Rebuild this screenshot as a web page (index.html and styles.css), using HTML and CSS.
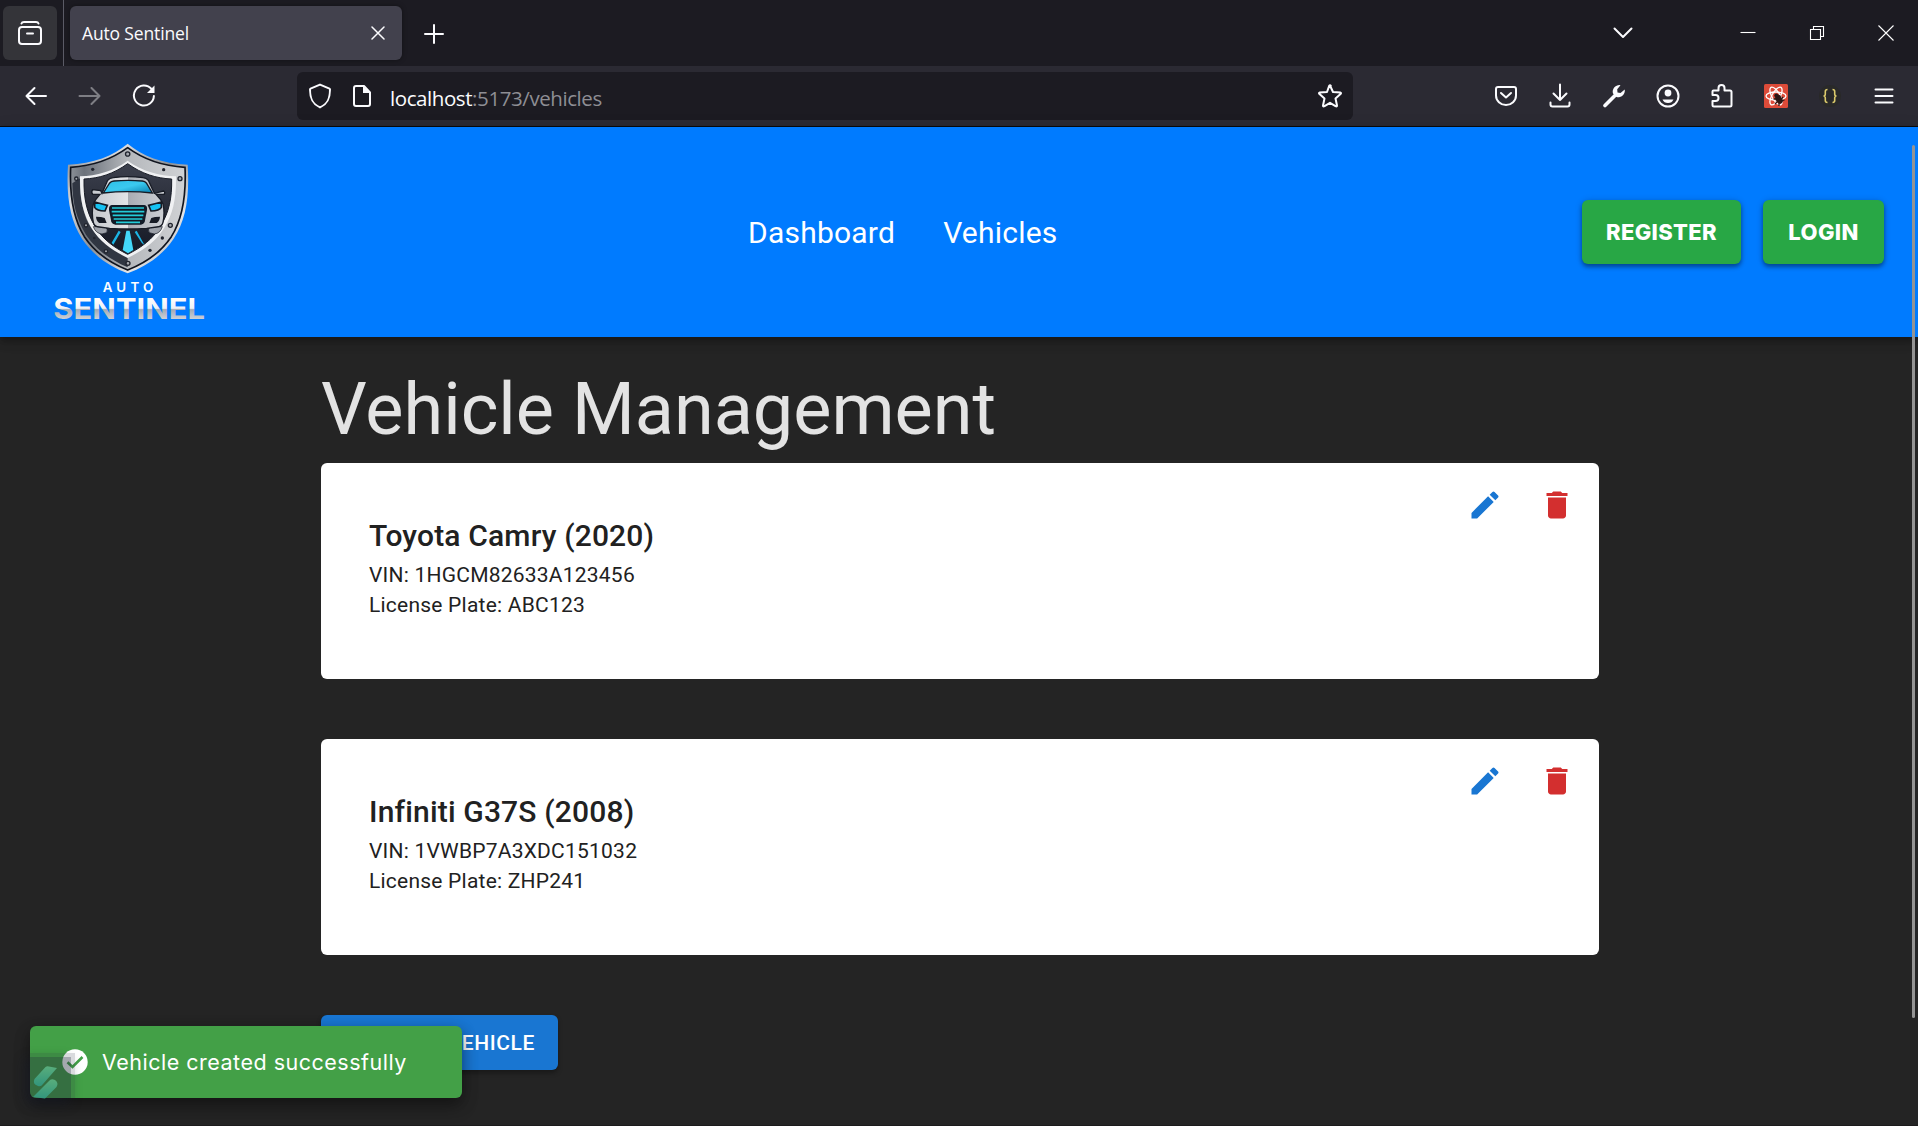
FILE: index.html
```html
<!DOCTYPE html>
<html lang="en">
<head>
<meta charset="utf-8">
<title>Auto Sentinel</title>
<link rel="stylesheet" href="styles.css">
</head>
<body>
<div class="tabbar">
  <div class="view-btn">
    <svg class="ico" width="26" height="26" viewBox="0 0 26 26"><path d="M4.500 2.500Q5 1 7 1H19Q21 1 21.500 2.500"/><rect x="2" y="6" width="22" height="17" rx="3"/><path d="M10 12.500H16"/></svg>
  </div>
  <div class="tab">
    <span class="tab-title">Auto Sentinel</span>
    <svg class="ico thin" width="14" height="14" viewBox="0 0 14 14"><path d="M1 1 13 13M13 1 1 13"/></svg>
  </div>
  <svg class="ico new-tab" width="20" height="20" viewBox="0 0 20 20"><path d="M10 1V19M1 10H19"/></svg>
  <div class="win-controls">
    <span class="list-tabs"><svg class="ico" width="20" height="12" viewBox="0 0 20 12"><path d="M1.500 1.500 10 10 18.500 1.500"/></svg></span>
    <span class="win"><svg class="ico hair" width="16" height="16" viewBox="0 0 16 16"><path d="M.5 7.500H15.500"/></svg></span>
    <span class="win"><svg class="ico hair" width="16" height="16" viewBox="0 0 16 16"><path d="M1.500 4.500H11.500V14.500H1.500ZM4.500 4.500V1.500H14.500V11.500H11.500"/></svg></span>
    <span class="win"><svg class="ico hair" width="18" height="18" viewBox="0 0 18 18"><path d="M1.500 1.500 16.500 16.500M16.500 1.500 1.500 16.500"/></svg></span>
  </div>
</div>
<div class="toolbar">
  <span class="slot"><svg class="ico" width="24" height="24" viewBox="0 0 24 24"><path d="M22 12H2.500M10.500 4 2.500 12 10.500 20"/></svg></span>
  <span class="slot dim"><svg class="ico" width="24" height="24" viewBox="0 0 24 24"><path d="M1.500 12H21.500M13.500 4 21.500 12 13.500 20"/></svg></span>
  <span class="slot"><svg class="ico" width="24" height="24" viewBox="0 0 24 24"><path d="M19.500 5A10 10 0 1 0 21.900 12"/><path class="fill" d="M22.500 1.500V9H15Z"/></svg></span>
  <div class="urlbar">
    <svg class="ico" width="24" height="26" viewBox="0 0 24 26"><path d="M12 1.600 2.500 5.600Q2 5.800 2 6.500C2 15 4 21 12 24.400C20 21 22 15 22 6.500Q22 5.800 21.500 5.600Z"/></svg>
    <svg class="ico page-ico" width="20" height="24" viewBox="0 0 20 24"><path d="M12 2H4Q2 2 2 4V20Q2 22 4 22H16Q18 22 18 20V8.500Z"/><path class="fill" d="M11 2V9H18Z"/></svg>
    <span class="url">localhost<span class="url-rest">:5173/vehicles</span></span>
    <svg class="ico star" width="26" height="26" viewBox="0 0 26 26"><path d="M13 2.500 16 9 23.500 9.600Q24.500 10 23.500 11L18.500 15.500 20 22.500Q20 24 18.500 23.200L13 19.800 7.500 23.200Q6 24 6 22.500L7.500 15.500 2.500 11Q1.500 10 2.500 9.600L10 9 12.200 2.800Q13 1.500 13.800 2.800"/></svg>
  </div>
  <div class="actions">
    <span class="slot"><svg class="ico" width="24" height="24" viewBox="0 0 24 24"><path d="M4 3H20Q22 3 22 5V11.500A10 9.500 0 0 1 2 11.500V5Q2 3 4 3Z"/><path d="M7 9 12 13.500 17 9"/></svg></span>
    <span class="slot"><svg class="ico" width="24" height="26" viewBox="0 0 24 26"><path d="M12 1.500V17M5.500 10.500 12 17 18.500 10.500M2.500 19.500V21.500Q2.500 23.500 4.500 23.500H19.500Q21.500 23.500 21.500 21.500V19.500"/></svg></span>
    <span class="slot"><svg width="24" height="24" viewBox="0 0 24 24"><path d="M3 21.500 14 10.500" stroke="#fbfbfe" stroke-width="3.600" stroke-linecap="round"/><path fill="#fbfbfe" d="M18.500 1.200A6.500 6.500 0 0 0 11 9.500L14.500 13A6.500 6.500 0 0 0 22.700 5.600L18.500 9 15.500 8.500 15.200 5.300Z"/></svg></span>
    <span class="slot"><svg class="ico" width="26" height="26" viewBox="0 0 26 26"><circle cx="13" cy="13" r="10.500"/><circle class="fill" cx="13" cy="10" r="3.400"/><path class="fill" d="M7.500 16.500H18.500Q17 20 13 20T7.500 16.500Z"/></svg></span>
    <span class="slot"><svg class="ico" width="24" height="26" viewBox="0 0 24 26"><path d="M2.500 11V8.500Q2.500 7.500 3.500 7.500H8.500V5A3 3 0 0 1 14.500 5V7.500H20Q21.500 7.500 21.500 9V22Q21.500 23.500 20 23.500H4Q2.500 23.500 2.500 22V18H5.500A3 3 0 0 0 5.500 12H2.500Z"/></svg></span>
    <span class="slot"><svg width="24" height="24" viewBox="0 0 24 24"><rect width="24" height="24" rx="1.500" fill="#dd4b39"/><g fill="none" stroke="#fff" stroke-width="1.300"><ellipse cx="12" cy="12" rx="10" ry="4"/><ellipse cx="12" cy="12" rx="10" ry="4" transform="rotate(60 12 12)"/><ellipse cx="12" cy="12" rx="10" ry="4" transform="rotate(120 12 12)"/></g><ellipse cx="15" cy="15.500" rx="3" ry="4.500" transform="rotate(-40 15 15.500)" fill="#2a1715"/><circle cx="12.300" cy="11.600" r="2" fill="#2a1715"/><path d="M9.500 15 13 15M11 20 14 17M14 11 17 12.500M19 13 17 15.500M15 22 15 18M20.500 16 17 17" stroke="#2a1715" stroke-width="1.300"/></svg></span>
    <span class="slot"><svg width="24" height="24" viewBox="0 0 24 24"><circle cx="12" cy="12" r="11" fill="#292929"/><path d="M9.500 5.500Q7.300 5.500 7.300 7.500V10Q7.300 12 5.500 12Q7.300 12 7.300 14V16.500Q7.300 18.500 9.500 18.500M14.500 5.500Q16.700 5.500 16.700 7.500V10Q16.700 12 18.500 12Q16.700 12 16.700 14V16.500Q16.700 18.500 14.500 18.500" fill="none" stroke="#dccb6c" stroke-width="1.600"/></svg></span>
    <span class="slot"><svg class="ico" width="20" height="20" viewBox="0 0 20 20"><path d="M1.500 3.500H18.500M1.500 10H18.500M1.500 16.500H18.500"/></svg></span>
  </div>
</div>

<div class="viewport">
  <header class="header">
    <svg class="logo" width="180" height="210" viewBox="0 -9 540 630">
      <defs>
        <linearGradient id="steel" x1="0" y1="0" x2="1" y2="1"><stop offset="0" stop-color="#777c83"/><stop offset=".25" stop-color="#d9dbde"/><stop offset=".5" stop-color="#8b8f95"/><stop offset=".75" stop-color="#e4e5e7"/><stop offset="1" stop-color="#85898f"/></linearGradient>
        <linearGradient id="rim" x1="0" y1="0" x2="1" y2="0"><stop offset="0" stop-color="#8b9097"/><stop offset=".12" stop-color="#6c727b"/><stop offset=".5" stop-color="#b5b8bc"/><stop offset="1" stop-color="#d0d2d5"/></linearGradient>
        <linearGradient id="inner" x1="0" y1="0" x2="0" y2="1"><stop offset="0" stop-color="#3c404d"/><stop offset="1" stop-color="#141824"/></linearGradient>
        <linearGradient id="glass" x1="0" y1="0" x2="1" y2="1"><stop offset="0" stop-color="#2bbfe8"/><stop offset=".5" stop-color="#3bc9ef"/><stop offset="1" stop-color="#087fb0"/></linearGradient>
        <linearGradient id="body" x1="0" y1="0" x2="1" y2="0"><stop offset="0" stop-color="#c5c8cd"/><stop offset=".5" stop-color="#e3e4e7"/><stop offset=".5" stop-color="#a9acb3"/><stop offset="1" stop-color="#cdd0d5"/></linearGradient>
        <linearGradient id="word" gradientUnits="userSpaceOnUse" x1="0" y1="503" x2="0" y2="567"><stop offset="0" stop-color="#fff"/><stop offset=".5" stop-color="#eef1f5"/><stop offset=".56" stop-color="#a4abb5"/><stop offset="1" stop-color="#ccd0d6"/></linearGradient>
      </defs>
      <path d="M263 41C220 77 160 101 84 104C78 200 90 270 126 326C163 380 210 410 263 430C316 410 364 380 401 326C438 270 449 200 443 104C366 101 306 77 263 41Z" fill="url(#steel)"/>
      <path d="M263 53C215 88 160 108 92 112C88 200 100 266 133 320C168 372 212 400 263 420C314 400 359 372 394 320C428 266 439 200 435 112C366 108 310 88 263 53Z" fill="url(#rim)" stroke="#10141e" stroke-width="5"/>
      <path d="M97 160C98 220 108 264 138 314C166 354 200 384 263 412V374C200 348 160 314 140 270C126 230 118 190 120 145Z" fill="#303642"/>
      <path d="M263 92C220 124 170 137 120 139C119 205 128 250 155 295C180 337 218 362 263 384C308 362 347 337 372 295C400 250 409 205 408 139C358 137 306 124 263 92Z" fill="#f0f1f3"/>
      <path d="M263 101C220 132 178 145 132 147C131 205 140 248 165 289C188 328 221 352 263 373C305 352 338 328 361 289C387 248 396 205 395 147C349 145 306 132 263 101Z" fill="url(#inner)" stroke="#171b25" stroke-width="3"/>
      <g fill="#a4a7ad" stroke="#20242e" stroke-width="4"><circle cx="263" cy="72" r="6.500"/><circle cx="109" cy="146" r="5"/><circle cx="420" cy="146" r="6"/><circle cx="138" cy="286" r="5"/><circle cx="391" cy="286" r="6"/><circle cx="198" cy="364" r="5"/><circle cx="264" cy="400" r="6"/></g>
      <g fill="#20242e"><circle cx="158" cy="118" r="5"/><circle cx="371" cy="119" r="5"/><circle cx="330" cy="361" r="5"/><circle cx="367" cy="324" r="5"/><circle cx="163" cy="324" r="4"/></g>
      <path d="M160 290H197Q205 300 200 308L186 312Q167 310 160 290ZM367 290H330Q322 300 328 308L343 312Q361 310 367 290Z" fill="#9da1a9" stroke="#171b25" stroke-width="2"/>
      <path d="M186 190 203 151Q208 144 220 143Q263 137 309 143Q320 144 325 151L343 190 371 183Q377 187 372 193H348Q363 208 369 222Q375 248 369 277Q366 290 350 291L320 295Q265 299 209 295L178 291Q163 290 160 277Q154 248 160 222Q166 208 180 193H158Q152 187 158 179L182 182Z" fill="url(#body)" stroke="#171b25" stroke-width="4"/>
      <path d="M190 189 209 159Q213 154 222 153Q263 149 307 153Q315 154 319 159L337 189Q263 181 190 189Z" fill="url(#glass)" stroke="#171b25" stroke-width="4"/>
      <path d="M164 216Q184 222 202 226L195 243Q170 242 164 232ZM364 216Q344 222 326 226L333 243Q358 242 364 232Z" fill="#16c2f2" stroke="#171b25" stroke-width="5"/>
      <path d="M215 225H313Q323 226 321 240L314 276Q311 283 303 284H226Q217 283 214 276L207 240Q206 226 215 225Z" fill="#111a27"/>
      <path d="M216 234H312M215 245H313M218 256H310M221 267H307M228 277H300" stroke="#23cbd8" stroke-width="5"/>
      <path d="M168 260Q185 260 194 264L200 279H178Q169 273 168 260ZM360 260Q343 260 334 264L328 279H350Q359 273 360 260Z" fill="#171b25"/>
      <path d="M259 302H269L280 360 264 370 248 360Z" fill="#43d7f8"/><path d="M236 302 242 306 220 344 215 338ZM290 302 284 306 306 340 313 344Z" fill="#1cb5e5"/>
      <text x="188" y="486" textLength="152" class="logo-auto">AUTO</text>
      <text x="40" y="566" textLength="455" lengthAdjust="spacingAndGlyphs" class="logo-word" fill="url(#word)">SENTINEL</text>
    </svg>
    <nav class="nav"><a>Dashboard</a><a>Vehicles</a></nav>
    <div class="auth"><button class="auth-btn register">REGISTER</button><button class="auth-btn login">LOGIN</button></div>
  </header>
  <main class="main">
    <h3 class="heading">Vehicle Management</h3>
    <article class="card">
      <div class="info"><h6 class="name">Toyota Camry (2020)</h6><p class="line">VIN: 1HGCM82633A123456</p><p class="line">License Plate: ABC123</p></div>
      <div class="tools">
        <svg class="edit" width="36" height="36" viewBox="0 0 24 24"><path d="M3 17.250V21h3.750L17.810 9.940l-3.750-3.750L3 17.250zM20.710 7.040c.39-.39.39-1.020 0-1.410l-2.340-2.340a.9959.9959 0 0 0-1.410 0l-1.830 1.830 3.750 3.750 1.830-1.830z"/></svg>
        <svg class="delete" width="36" height="36" viewBox="0 0 24 24"><path d="M6 19c0 1.100.9 2 2 2h8c1.100 0 2-.9 2-2V7H6v12zM19 4h-3.500l-1-1h-5l-1 1H5v2h14V4z"/></svg>
      </div>
    </article>
    <article class="card">
      <div class="info"><h6 class="name">Infiniti G37S (2008)</h6><p class="line">VIN: 1VWBP7A3XDC151032</p><p class="line">License Plate: ZHP241</p></div>
      <div class="tools">
        <svg class="edit" width="36" height="36" viewBox="0 0 24 24"><path d="M3 17.250V21h3.750L17.810 9.940l-3.750-3.750L3 17.250zM20.710 7.040c.39-.39.39-1.020 0-1.410l-2.340-2.340a.9959.9959 0 0 0-1.410 0l-1.830 1.830 3.750 3.750 1.830-1.830z"/></svg>
        <svg class="delete" width="36" height="36" viewBox="0 0 24 24"><path d="M6 19c0 1.100.9 2 2 2h8c1.100 0 2-.9 2-2V7H6v12zM19 4h-3.500l-1-1h-5l-1 1H5v2h14V4z"/></svg>
      </div>
    </article>
    <button class="add-btn">VEHICLE</button>
  </main>
  <div class="scroll-thumb"></div>
  <div class="toast">
    <svg width="26" height="26" viewBox="0 0 26 26"><circle cx="13" cy="13" r="12.700" fill="#fff"/><path d="M5.500 13.200 10.500 18 20.500 8" fill="none" stroke="#43a047" stroke-width="2.600"/></svg>
    <span class="toast-text">Vehicle created successfully</span>
    <div class="badge">
      <svg width="45" height="46" viewBox="0 0 45 46"><defs><linearGradient id="mint" x1="0" y1="0" x2="0" y2="1"><stop offset="0" stop-color="#59ad7c"/><stop offset="1" stop-color="#32957c"/></linearGradient></defs><path d="M15.500 14Q17 12.800 19 13.500L27 15 13 31Q11 34 8 33Q2 31 4.500 26Z" fill="url(#mint)"/><path d="M19 28Q21 25 25 27Q29 30 26.500 34L15 45.500 3 44Z" fill="url(#mint)"/></svg>
    </div>
  </div>
</div>
</body>
</html>
```

FILE: styles.css
```css
* { box-sizing: border-box; }
body { margin: 0; width: 1918px; height: 1126px; overflow: hidden; display: flex; flex-direction: column; background: #242424; font-family: Roboto, sans-serif; }
svg { display: block; flex: none; }
.ico { fill: none; stroke: #fbfbfe; stroke-width: 2; stroke-linecap: round; stroke-linejoin: round; }
.ico .fill { fill: #fbfbfe; stroke: none; }
.thin { stroke-width: 1.5; }
.hair { stroke: #fff; stroke-width: 1.1; stroke-linecap: butt; stroke-linejoin: miter; }

.tabbar { height: 66px; flex: none; display: flex; align-items: center; background: #1c1b22; }
.view-btn { width: 54px; height: 54px; margin-left: 3px; border-radius: 6px; background: #343439; display: flex; align-items: center; justify-content: center; }
.view-btn svg { margin-top: 2px; }
.tab { width: 332px; height: 54px; margin-left: 13px; padding: 0 17px 0 12px; border-radius: 6px; background: #42414d; box-shadow: 0 0 5px #0006; display: flex; align-items: center; justify-content: space-between; position: relative; }
.tab::before { content: ""; position: absolute; left: -7px; top: -6px; width: 1px; height: 66px; background: #5b5b66; }
.tab-title { color: #fbfbfe; font: 17.5px "Open Sans", "Noto Sans", sans-serif; letter-spacing: -.15px; }
.new-tab { margin-left: 22px; margin-top: 2px; }
.win-controls { margin: 0 -2px 0 auto; display: flex; align-items: center; }
.list-tabs { width: 54px; margin-right: 63px; display: flex; justify-content: center; }
.win { width: 69px; display: flex; justify-content: center; }

.toolbar { height: 61px; flex: none; display: flex; align-items: center; padding-left: 9px; padding-right: 7px; background: #2b2a33; border-bottom: 1px solid #0c0c0d; }
.slot { width: 54px; display: flex; justify-content: center; }
.dim { opacity: .4; }
.urlbar { width: 1056px; height: 48px; margin-left: 126px; padding: 0 10px 0 11px; border-radius: 6px; background: #1c1b22; display: flex; align-items: center; }
.page-ico { margin-left: 20px; }
.url { margin-left: 18px; padding-top: 3px; color: #fbfbfe; font: 20.5px "Open Sans", "Noto Sans", sans-serif; letter-spacing: -.42px; }
.url-rest { color: #8e8e94; }
.star { margin-left: auto; }
.actions { margin-left: auto; display: flex; align-items: center; }

.viewport { flex: 1; min-height: 0; display: flex; flex-direction: column; position: relative; border-bottom: 1px solid #1c1b1c; }
.header { height: 210px; flex: none; display: flex; align-items: center; padding: 0 34px 0 40px; background: #007bff; box-shadow: 0 3px 6px -1px #0003, 0 6px 8px #0002, 0 2px 15px #0002; }
.logo-auto { font: 600 40px Inter, sans-serif; fill: #fff; }
.logo-word { font: 700 87px Inter, sans-serif; }
.nav { margin-left: 528px; padding-top: 2px; display: flex; gap: 48px; color: #fff; font-size: 30px; line-height: 48px; letter-spacing: .225px; }
.auth { margin-left: auto; display: flex; gap: 22px; }
.auth-btn { height: 64px; border: 0; border-radius: 6px; padding: 0; background: #28a745; color: #fff; font: 800 22px Inter, sans-serif; letter-spacing: .35px; box-shadow: 0 3px 4px #0005, 0 1px 7px #0003; }
.register { width: 159px; }
.login { width: 121px; }

.main { width: 1278px; margin-left: 321px; padding-top: 31px; display: flex; flex-direction: column; align-items: flex-start; }
.heading { margin: 0 0 11px; font-size: 72px; font-weight: 400; line-height: 84px; color: #e3e3e3; }
.card { width: 1278px; height: 216px; margin-bottom: 60px; padding: 49px 48px 47px; border-radius: 6px; background: #fff; display: flex; justify-content: space-between; color: #212121; }
.name { margin: 0; font-size: 30px; font-weight: 500; line-height: 48px; letter-spacing: .16px; }
.line { margin: 0; font-size: 21px; line-height: 30px; letter-spacing: .225px; }
.tools { display: flex; gap: 36px; margin: -25px -24px 0 0; }
.edit { fill: #1976d2; }
.delete { fill: #d32f2f; }
.add-btn { width: 237px; height: 55px; border: 0; border-radius: 6px; padding: 0 23px; text-align: right; background: #1976d2; color: #fff; font: 500 21px Roboto, sans-serif; letter-spacing: .6px; box-shadow: 0 3px 5px #0005; }

.scroll-thumb { position: absolute; left: 1912px; top: 18px; width: 3px; height: 873px; border-radius: 2px; background: #949494; }
.toast { position: absolute; left: 30px; top: 899px; width: 432px; height: 72px; padding-left: 32px; border-radius: 6px; background: #43a047; color: #fff; display: flex; align-items: center; box-shadow: 0 5px 15px #0005, 0 9px 18px #0003; }
.toast-text { margin-left: 14px; white-space: nowrap; font: 21.5px Inter, sans-serif; letter-spacing: .5px; }
.badge { position: absolute; left: 0; bottom: 0; width: 45px; height: 45px; background: #23263b2c; border-radius: 0 0 0 6px; box-shadow: -5px 6px 12px #171b2c66; }
.badge::before { content: ""; position: absolute; left: 0; bottom: 0; width: 41px; height: 41px; border-radius: 0 0 0 6px; background: #242b3d48; }
.badge svg { position: relative; }
```
